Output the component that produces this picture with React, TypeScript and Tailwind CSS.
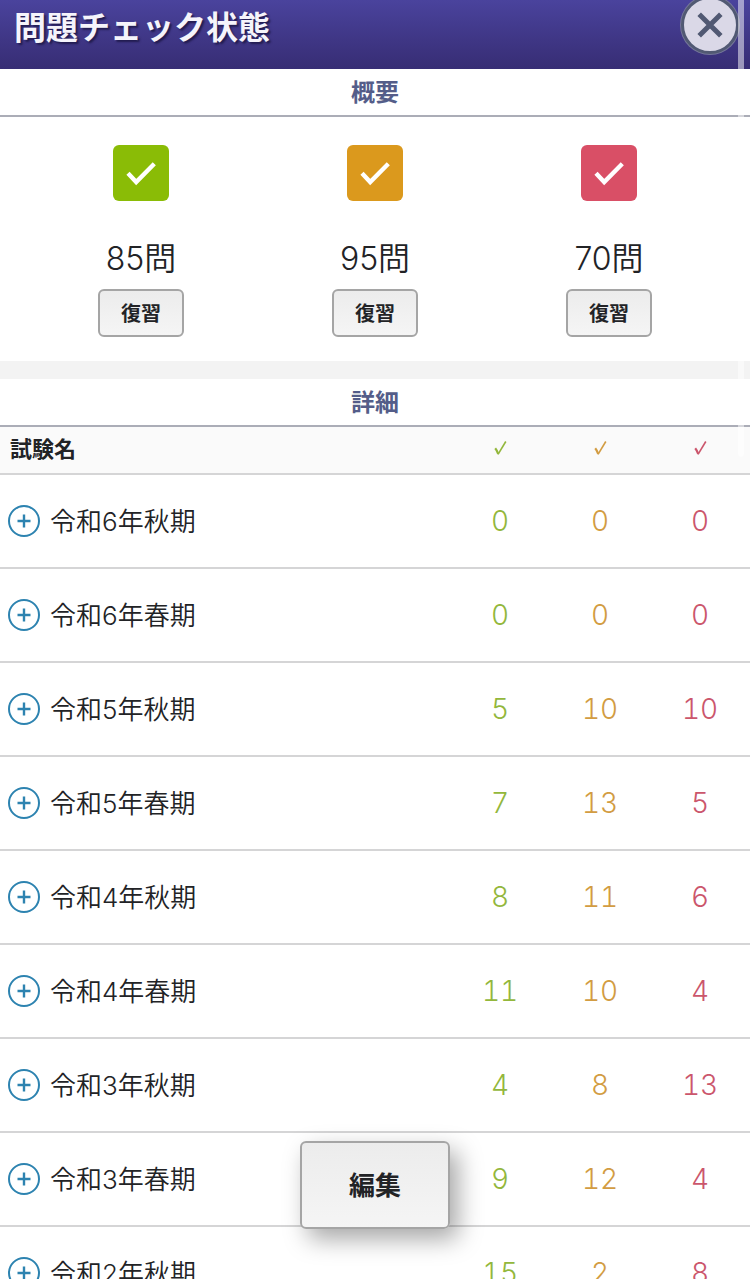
const summary = [
  { label: '緑', count: 85, bg: 'bg-[#8abc06]' },
  { label: '橙', count: 95, bg: 'bg-[#db991d]' },
  { label: '赤', count: 70, bg: 'bg-[#d94f66]' },
];

const exams = [
  { name: '令和6年秋期', counts: [0, 0, 0] },
  { name: '令和6年春期', counts: [0, 0, 0] },
  { name: '令和5年秋期', counts: [5, 10, 10] },
  { name: '令和5年春期', counts: [7, 13, 5] },
  { name: '令和4年秋期', counts: [8, 11, 6] },
  { name: '令和4年春期', counts: [11, 10, 4] },
  { name: '令和3年秋期', counts: [4, 8, 13] },
  { name: '令和3年春期', counts: [9, 12, 4] },
  { name: '令和2年秋期', counts: [15, 2, 8] },
];

const columns = [
  { label: '緑', color: 'text-[#93b73c]' },
  { label: '橙', color: 'text-[#d29c42]' },
  { label: '赤', color: 'text-[#cb566c]' },
];

function SectionTitle({ children }: { children: string }) {
  return (
    <h2 className="border-b-2 border-[#abadb7] pt-0.5 text-center text-2xl leading-11 font-bold text-[#545d89]">
      {children}
    </h2>
  );
}

function Header() {
  return (
    <header className="relative bg-gradient-to-b from-[#4a439d] to-[#372d74] px-3.5 pt-0.5 pb-[15px]">
      <h1 className="text-[32px] leading-13 font-bold text-[#f5f4fb] [text-shadow:2px_2px_2px_#221c50]">
        問題チェック状態
      </h1>
      {/* Close button */}
      <button
        type="button"
        aria-label="閉じる"
        className="absolute -top-1 right-[11px] flex size-[58px] items-center justify-center rounded-full border-[3px] border-[#515973] bg-[#dad8e7] ring-1 ring-[#75769a]"
      >
        <svg viewBox="0 0 26 26" className="size-[26px]" fill="none" stroke="#515973" strokeWidth="5">
          <path d="M2.2 2.2 23.8 23.8M23.8 2.2 2.2 23.8" />
        </svg>
      </button>
    </header>
  );
}

function Overview() {
  return (
    <section>
      <SectionTitle>概要</SectionTitle>
      <div className="grid grid-cols-3 px-6 pt-7 pb-6">
        {summary.map((item) => (
          <div key={item.label} className="flex flex-col items-center">
            <div className={`flex size-14 items-center justify-center rounded-md ${item.bg}`}>
              <svg viewBox="0 0 56 56" className="size-14" fill="none" stroke="#fff" strokeWidth="4.4">
                <path d="M15 28.3 23.2 37 41.3 18.8" />
              </svg>
            </div>
            <p className="mt-9 text-[32px] leading-11 font-[350]">{item.count}問</p>
            <button
              type="button"
              className="mt-2 h-12 w-[86px] rounded-md border-2 border-[#a5a5a5] bg-gradient-to-b from-[#ececec] to-[#f5f5f5] pt-0.5 text-xl font-bold"
            >
              復習
            </button>
          </div>
        ))}
      </div>
    </section>
  );
}

function Details() {
  return (
    <section>
      <SectionTitle>詳細</SectionTitle>
      <table className="w-full table-fixed border-separate border-spacing-0">
        <thead className="bg-[#fafafa]">
          <tr>
            <th className="h-12 border-b-2 border-[#d5d5d6] pt-0 pb-0.5 pl-2.5 text-left text-[22px] leading-8 font-bold">
              試験名
            </th>
            {columns.map((col) => (
              <th
                key={col.label}
                aria-label={col.label}
                className={`w-[100px] border-b-2 border-[#d5d5d6] pt-0 pb-1 ${col.color}`}
              >
                <svg viewBox="0 0 14 16" className="mx-auto h-4 w-3.5" fill="none" stroke="currentColor">
                  <path d="M2.2 8.2Q4.2 10.5 5.2 14" strokeWidth="2.2" />
                  <path d="M5 14.4 12.8 1.5" strokeWidth="1.6" />
                </svg>
              </th>
            ))}
          </tr>
        </thead>
        <tbody>
          {exams.map((exam) => (
            <tr key={exam.name}>
              <td className="h-[94px] border-b-2 border-[#d5d5d6] py-0 pl-2">
                <div className="flex items-center gap-2.5">
                  <button type="button" aria-label={`${exam.name}を開く`} className="text-[#2d83b0]">
                    <svg viewBox="0 0 32 32" className="block size-8" fill="none" stroke="currentColor" strokeWidth="2">
                      <circle cx="16" cy="16" r="15" />
                      <path d="M16 9.5v13M9.5 16h13" strokeWidth="2.4" />
                    </svg>
                  </button>
                  <span className="pt-0.5 text-[26px] leading-10 font-[350]">{exam.name}</span>
                </div>
              </td>
              {exam.counts.map((count, i) => (
                <td
                  key={columns[i].label}
                  className={`border-b-2 border-[#d5d5d6] p-0 text-center text-[28px] leading-10 font-light tabular-nums ${columns[i].color}`}
                >
                  {count}
                </td>
              ))}
            </tr>
          ))}
        </tbody>
      </table>
    </section>
  );
}

export default function App() {
  return (
    <div className="relative h-screen overflow-hidden bg-white font-[Inter,'Noto_Sans_CJK_JP',sans-serif] text-[#222326]">
      <main className="h-full overflow-y-auto [scrollbar-width:none]">
        <Header />
        <Overview />
        <div className="h-[18px] bg-[#f3f3f3]" />
        <Details />
      </main>

      {/* Scroll indicator */}
      <div className="pointer-events-none absolute top-0 right-1.5 h-[457px] w-1.5 rounded-b-full bg-white/50" />

      <button
        type="button"
        className="absolute bottom-[50px] left-1/2 h-[88px] w-[150px] -translate-x-1/2 rounded-md border-2 border-[#a5a5a5] bg-gradient-to-b from-[#ececec] to-[#f5f5f5] text-[26px] font-bold shadow-[8px_10px_24px_rgba(0,0,0,0.35)]"
      >
        編集
      </button>
    </div>
  );
}
